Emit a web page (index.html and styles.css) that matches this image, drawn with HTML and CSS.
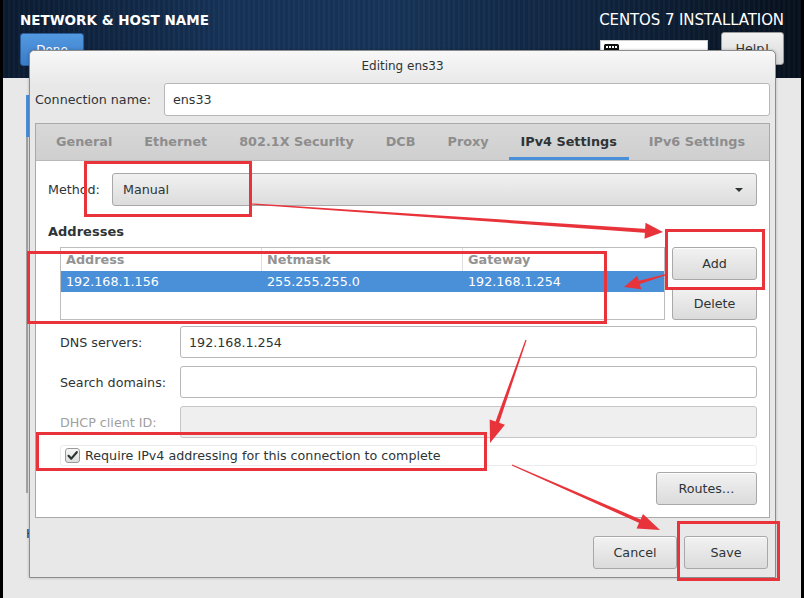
FILE: index.html
```html
<!DOCTYPE html>
<html lang="en">
<head>
<meta charset="utf-8">
<title>Network &amp; Host Name</title>
<link rel="stylesheet" href="styles.css">
</head>
<body>
<div class="screen">
  <header class="topbar">
    <div class="top-left">
      <h1 class="spoke-title">NETWORK &amp; HOST NAME</h1>
      <button class="done-btn">Done</button>
    </div>
    <div class="top-right">
      <div class="product">CENTOS 7 INSTALLATION</div>
      <div class="top-controls">
        <div class="kbd-box">
          <svg class="kbd-icon" width="15" height="11" viewBox="0 0 15 11"><rect x="0" y="0" width="15" height="11" rx="1.5" fill="#111"/><g fill="#fff"><rect x="2" y="2" width="2" height="2"/><rect x="5" y="2" width="2" height="2"/><rect x="8" y="2" width="2" height="2"/><rect x="11" y="2" width="2" height="2"/></g></svg>
        </div>
        <button class="help-btn">Help!</button>
      </div>
    </div>
  </header>
  <main class="spoke-body">
    <div class="device-list"><div class="device-sel"></div></div>
    <div class="host-label">Host name:</div>
  </main>
</div>

<div class="dialog">
  <div class="dialog-title">Editing ens33</div>
  <div class="dialog-body">
    <div class="conn-row">
      <span class="label">Connection name:</span>
      <div class="text-input">ens33</div>
    </div>
    <div class="notebook">
      <div class="tabs">
        <div class="tab">General</div>
        <div class="tab">Ethernet</div>
        <div class="tab">802.1X Security</div>
        <div class="tab">DCB</div>
        <div class="tab">Proxy</div>
        <div class="tab active">IPv4 Settings</div>
        <div class="tab">IPv6 Settings</div>
      </div>
      <div class="tab-page">
        <div class="method-row">
          <span class="label">Method:</span>
          <div class="combo"><span>Manual</span><span class="combo-arrow"></span></div>
        </div>
        <div class="section-title">Addresses</div>
        <div class="addr-section">
          <div class="addr-table">
            <div class="addr-head">
              <div class="cell">Address</div>
              <div class="cell">Netmask</div>
              <div class="cell">Gateway</div>
            </div>
            <div class="addr-row selected">
              <div class="cell">192.168.1.156</div>
              <div class="cell">255.255.255.0</div>
              <div class="cell">192.168.1.254</div>
            </div>
          </div>
          <div class="addr-buttons">
            <button class="btn">Add</button>
            <button class="btn">Delete</button>
          </div>
        </div>
        <div class="form-grid">
          <span class="label">DNS servers:</span>
          <div class="text-input">192.168.1.254</div>
          <span class="label">Search domains:</span>
          <div class="text-input"></div>
          <span class="label disabled">DHCP client ID:</span>
          <div class="text-input disabled"></div>
        </div>
        <div class="check-row">
          <span class="checkbox"><svg width="13" height="13" viewBox="0 0 13 13"><path d="M2.5 6.8 L5.3 9.6 L10.8 3.2" fill="none" stroke="#2e3436" stroke-width="2.2" stroke-linecap="round" stroke-linejoin="round"/></svg></span>
          <span class="check-label">Require IPv4 addressing for this connection to complete</span>
        </div>
        <button class="btn routes-btn">Routes…</button>
      </div>
    </div>
    <div class="dialog-actions">
      <button class="btn action-btn">Cancel</button>
      <button class="btn action-btn">Save</button>
    </div>
  </div>
</div>

<svg class="annotations" width="804" height="598" viewBox="0 0 804 598">
  <g fill="none" stroke="#e8333a" stroke-width="3">
    <rect x="85.5" y="162.5" width="165" height="53"/>
    <rect x="28.5" y="252.5" width="577" height="70"/>
    <rect x="666.5" y="230.5" width="97" height="58"/>
    <rect x="37.5" y="433.5" width="448" height="36"/>
    <rect x="678.5" y="522.5" width="100" height="57"/>
  </g>
  <g fill="#e8333a">
    <path d="M251.96 204.6 L650.86 233.2 L651.14 229.2 L252.04 203.4 Z"/>
    <path d="M663 232 L644.5 238.8 L645.5 222.8 Z"/>
    <path d="M667.83 273.42 L633.03 282.28 L634.17 286.12 L668.17 274.58 Z"/>
    <path d="M624 287 L637.3 275.8 L641.3 289.2 Z"/>
    <path d="M525.43 339.8 L492.1 431.0 L495.9 432.4 L526.57 340.2 Z"/>
    <path d="M490 443 L489.7 419.6 L504.9 424.8 Z"/>
    <path d="M511.76 465.55 L648.2 527.0 L649.8 523.4 L512.24 464.45 Z"/>
    <path d="M660 530 L636.6 528.5 L643.0 513.9 Z"/>
  </g>
</svg>
</body>
</html>
```

FILE: styles.css
```css
* { box-sizing: border-box; }

html, body { margin: 0; padding: 0; }

body {
  width: 804px;
  height: 598px;
  overflow: hidden;
  position: relative;
  background: #000;
  font-family: "DejaVu Sans", "Noto Sans", sans-serif;
  font-size: 12.7px;
  color: #2e3436;
}

button { font-family: inherit; font-size: inherit; color: inherit; padding: 0; }

.screen {
  margin: 0 3px;
  height: 598px;
  display: flex;
  flex-direction: column;
}

/* ---------- top bar ---------- */
.topbar {
  height: 78px;
  flex: none;
  display: flex;
  justify-content: space-between;
  padding: 11px 17px 0 17px;
  color: #fff;
  background:
    repeating-linear-gradient(90deg, rgba(255,255,255,0.025) 0 2px, rgba(0,0,0,0.04) 2px 5px),
    linear-gradient(90deg, #0b1b31 0%, #163358 28%, #173559 48%, #10243f 75%, #07111d 100%);
}

.spoke-title {
  margin: 0;
  font-size: 13.5px;
  font-weight: bold;
  line-height: 18px;
}

.done-btn {
  display: block;
  margin-top: 4px;
  width: 64px;
  height: 33px;
  border: 1px solid #2a5d99;
  border-radius: 3px;
  background: linear-gradient(#5299e0, #3a7cc6);
  color: #fff;
  font-size: 12px;
}

.top-right { display: flex; flex-direction: column; align-items: flex-end; }

.product {
  font-size: 15px;
  line-height: 18px;
  letter-spacing: -0.1px;
}

.top-controls { display: flex; gap: 13px; margin-top: 3px; align-items: flex-start; }

.kbd-box {
  margin-top: 8px;
  width: 108px;
  height: 26px;
  background: #fff;
  border: 1px solid #ccc;
  padding: 3px 0 0 3px;
}
.kbd-icon { display: block; }

.help-btn {
  width: 63px;
  height: 33px;
  border: 1px solid #9a9a9a;
  border-radius: 3px;
  background: linear-gradient(#f2f2f2, #d9d9d9);
  color: #2e3436;
  font-size: 12.7px;
}

/* ---------- page behind the dialog ---------- */
.spoke-body {
  flex: 1;
  background: #e8e8e8;
  padding: 17px 0 0 23px;
}

.device-list {
  width: 60px;
  height: 398px;
  border-left: 2px solid #a3a3a3;
}
.device-sel { width: 60px; height: 42px; margin-left: -2px; background: #4a90d9; }

.host-label { margin-top: 33px; font-size: 12.7px; }

/* ---------- dialog ---------- */
.dialog {
  position: absolute;
  left: 29px;
  top: 50px;
  width: 747px;
  height: 528px;
  border: 1px solid #8c8c8c;
  border-radius: 5px 5px 0 0;
  background: #e8e8e8;
  display: flex;
  flex-direction: column;
  box-shadow: 0 0 3px rgba(0,0,0,0.25);
}

.dialog-title {
  height: 32px;
  flex: none;
  line-height: 30px;
  text-align: center;
  font-size: 12px;
  background: linear-gradient(#f8f8f8, #e9e9e9);
  border-radius: 5px 5px 0 0;
}

.dialog-body {
  flex: 1;
  padding: 0 5px 8px;
  display: flex;
  flex-direction: column;
}

.conn-row {
  display: grid;
  grid-template-columns: 129px 1fr;
  align-items: center;
  height: 33px;
}

.text-input {
  height: 33px;
  border: 1px solid #b7b7b7;
  border-radius: 3px;
  background: #fff;
  padding: 0 8px;
  display: flex;
  align-items: center;
}
.text-input.disabled { background: #efefef; border-color: #c6c6c6; }

.notebook {
  margin-top: 7px;
  height: 395px;
  border: 1px solid #a9a9a9;
  display: flex;
  flex-direction: column;
  background: #fff;
}

.tabs {
  height: 37px;
  flex: none;
  display: flex;
  gap: 8px;
  padding-left: 8px;
  background: linear-gradient(#d8d8d8, #cfcfcf);
  border-bottom: 1px solid #b9b9b9;
}

.tab {
  padding: 0 12px;
  line-height: 36px;
  font-weight: bold;
  font-size: 12.8px;
  color: #8d8d8d;
  white-space: nowrap;
}
.tab.active { color: #2e3436; box-shadow: inset 0 -3px #4a90d9; }

.tab-page {
  flex: 1;
  padding: 12px;
  display: flex;
  flex-direction: column;
}

.method-row {
  display: grid;
  grid-template-columns: 64px 1fr;
  align-items: center;
}

.combo {
  height: 33px;
  border: 1px solid #a8a8a8;
  border-radius: 3px;
  background: linear-gradient(#f1f1f1, #dcdcdc);
  padding: 0 13px 0 10px;
  display: flex;
  align-items: center;
  justify-content: space-between;
}
.combo-arrow {
  width: 0;
  height: 0;
  border-left: 4px solid transparent;
  border-right: 4px solid transparent;
  border-top: 4px solid #2e3436;
}

.section-title {
  margin-top: 18px;
  font-weight: bold;
  font-size: 13px;
  line-height: 16px;
}

.addr-section {
  margin-top: 7px;
  padding-left: 12px;
  display: grid;
  grid-template-columns: 1fr 85px;
  gap: 7px;
}

.addr-table {
  height: 73px;
  border: 1px solid #bdbdbd;
  background: #fff;
}

.addr-head, .addr-row {
  display: grid;
  grid-template-columns: 201px 201px 1fr;
}
.addr-head { height: 23px; }
.addr-head .cell {
  line-height: 23px;
  font-weight: bold;
  font-size: 12.8px;
  color: #939393;
  padding-left: 5px;
  border-right: 1px solid #dedede;
}
.addr-head .cell:last-child { border-right: none; }

.addr-row { height: 21px; }
.addr-row .cell { line-height: 21px; padding-left: 5px; }
.addr-row.selected { background: #4a90d9; color: #fff; }

.addr-buttons { display: flex; flex-direction: column; gap: 7px; }

.btn {
  height: 33px;
  border: 1px solid #a8a8a8;
  border-radius: 3px;
  background: linear-gradient(#f2f2f2, #dbdbdb);
  color: #2e3436;
  box-shadow: inset 0 1px rgba(255,255,255,0.8);
}

.form-grid {
  margin-top: 6px;
  padding-left: 12px;
  display: grid;
  grid-template-columns: 120px 1fr;
  grid-auto-rows: 32px;
  row-gap: 8px;
  align-items: center;
}
.form-grid .text-input { height: 32px; }
.label.disabled { color: #a0a0a0; }

.check-row {
  margin-top: 7px;
  margin-left: 12px;
  height: 21px;
  border: 1px solid #ececec;
  border-radius: 3px;
  display: flex;
  align-items: center;
  padding-left: 4px;
  gap: 5px;
}

.checkbox {
  width: 15px;
  height: 15px;
  border: 1px solid #9a9a9a;
  border-radius: 3px;
  background: linear-gradient(#f6f6f6, #dedede);
  display: flex;
  align-items: center;
  justify-content: center;
}
.checkbox svg { display: block; }

.routes-btn {
  margin-top: 6px;
  align-self: flex-end;
  width: 101px;
}

.dialog-actions {
  margin-top: 18px;
  display: flex;
  justify-content: flex-end;
  gap: 7px;
  padding-right: 2px;
}
.action-btn { width: 84px; }

/* ---------- annotations ---------- */
.annotations {
  position: absolute;
  left: 0;
  top: 0;
  pointer-events: none;
}
```
